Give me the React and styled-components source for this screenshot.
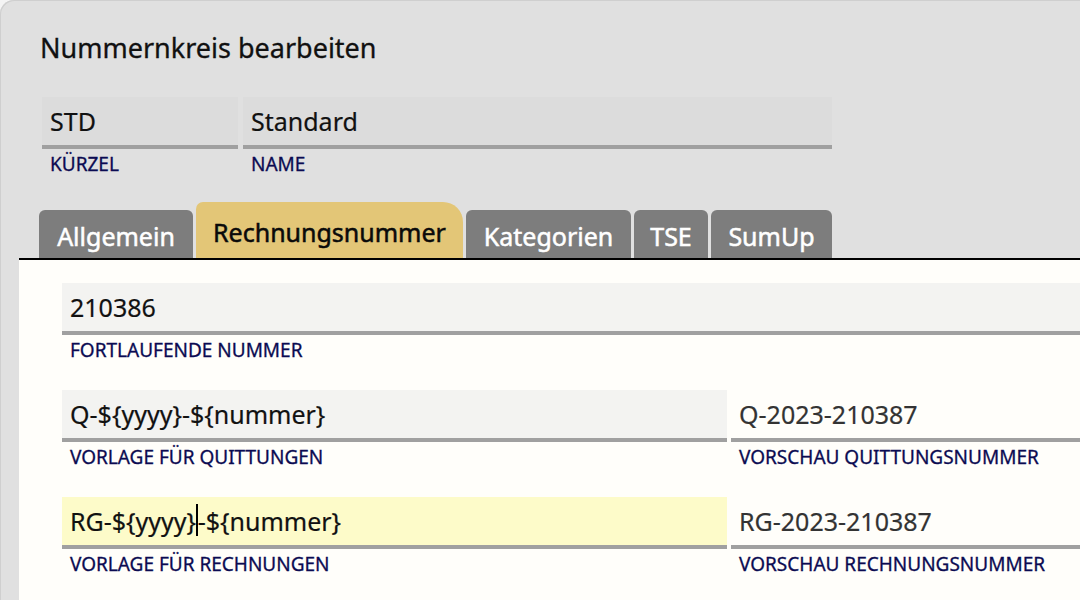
import React from 'react'
import styled, { createGlobalStyle } from 'styled-components'

const GlobalStyle = createGlobalStyle`
    html, body {
        margin: 0;
        padding: 0;
        background: #f4f4f4;
        overflow: hidden;
    }
    body {
        font-family: "Noto Sans", "Open Sans", sans-serif;
    }
`

const tabs = [
    { label: 'Allgemein', width: 154 },
    { label: 'Rechnungsnummer', width: 267, active: true },
    { label: 'Kategorien', width: 165 },
    { label: 'TSE', width: 74 },
    { label: 'SumUp', width: 121 },
]

const App = () => {

    return (
        <Page>
            <GlobalStyle />
            <Header>
                <Title>Nummernkreis bearbeiten</Title>

                <FieldRow>
                    <Field width={196}>
                        <FieldBox tone={'header'}>STD</FieldBox>
                        <FieldLabel>Kürzel</FieldLabel>
                    </Field>
                    <Field width={589}>
                        <FieldBox tone={'header'}>Standard</FieldBox>
                        <FieldLabel>Name</FieldLabel>
                    </Field>
                </FieldRow>
            </Header>

            <TabBar>
                { tabs.map(t =>
                    <Tab key={t.label} active={t.active} width={t.width}>{t.label}</Tab>
                )}
            </TabBar>

            <Content>
                <ContentRow>
                    <Field width={1040}>
                        <FieldBox tone={'input'}>210386</FieldBox>
                        <FieldLabel>Fortlaufende Nummer</FieldLabel>
                    </Field>
                </ContentRow>

                <ContentRow>
                    <Field width={665}>
                        <FieldBox tone={'input'}>Q-${'{yyyy}'}-${'{nummer}'}</FieldBox>
                        <FieldLabel>Vorlage für Quittungen</FieldLabel>
                    </Field>
                    <Field width={370}>
                        <FieldBox tone={'preview'}>Q-2023-210387</FieldBox>
                        <FieldLabel>Vorschau Quittungsnummer</FieldLabel>
                    </Field>
                </ContentRow>

                <ContentRow>
                    <Field width={665}>
                        <FieldBox tone={'focus'}>
                            RG-${'{yyyy}'}<Caret />-${'{nummer}'}
                        </FieldBox>
                        <FieldLabel>Vorlage für Rechnungen</FieldLabel>
                    </Field>
                    <Field width={370}>
                        <FieldBox tone={'preview'}>RG-2023-210387</FieldBox>
                        <FieldLabel>Vorschau Rechnungsnummer</FieldLabel>
                    </Field>
                </ContentRow>
            </Content>
        </Page>
    )
}

const boxColors = {
    header: '#dcdcdc',
    input: '#f3f3f1',
    focus: '#fdfbc9',
    preview: 'transparent',
}

const Page = styled.div`
    width: 1080px;
    height: 600px;
    background-color: #e0e0e0;
    border-top-left-radius: 14px;
    box-shadow: inset 1px 1px 0 #cfcfcf;
    overflow: hidden;
    display: flex;
    flex-direction: column;
`

const Header = styled.div`
    padding: 28px 0 0 40px;
`

const Title = styled.h1`
    margin: 0;
    height: 40px;
    font-size: 27px;
    font-weight: 400;
    line-height: 40px;
    color: #111;
    -webkit-text-stroke: 0.3px #111;
`

const FieldRow = styled.div`
    display: flex;
    gap: 5px;
    margin-top: 29px;
    margin-left: 2px;
`

const Field = styled.div`
    width: ${props => props.width}px;
    flex-shrink: 0;
    display: flex;
    flex-direction: column;
`

const FieldBox = styled.div`
    height: 48px;
    box-sizing: content-box;
    background-color: ${props => boxColors[props.tone]};
    border-bottom: 4px solid #a0a0a0;
    padding: 0 8px;
    display: flex;
    align-items: center;
    font-size: 25px;
    color: ${props => props.tone === 'preview' ? '#333' : '#111'};
    -webkit-text-stroke: 0.2px currentColor;
    white-space: nowrap;
`

const FieldLabel = styled.div`
    padding: 4px 8px 0;
    height: 22px;
    font-size: 19px;
    line-height: 22px;
    text-transform: uppercase;
    color: #0b0b52;
    -webkit-text-stroke: 0.3px #0b0b52;
`

const Caret = styled.span`
    display: inline-block;
    width: 1.5px;
    height: 32px;
    background-color: #000;
    margin-bottom: 2px;
`

const TabBar = styled.div`
    display: flex;
    align-items: flex-end;
    gap: 3px;
    margin-top: 27px;
    padding-left: 39px;
    height: 56px;
`

const Tab = styled.div`
    width: ${props => props.width}px;
    height: ${props => props.active ? '56px' : '48px'};
    box-sizing: border-box;
    padding-top: 4px;
    background-color: ${props => props.active ? '#e3c677' : '#7d7d7d'};
    color: ${props => props.active ? '#0a0a0a' : '#ffffff'};
    border-radius: ${props => props.active ? '7px 20px 0 0' : '6px 6px 0 0'};
    display: flex;
    align-items: center;
    justify-content: center;
    font-size: 25px;
    font-weight: 400;
    -webkit-text-stroke: 0.5px currentColor;
`

const Content = styled.div`
    flex: 1;
    margin-left: 19px;
    background-color: #fffefa;
    border-top: 2px solid #000;
    padding: 23px 0 0 43px;
    display: flex;
    flex-direction: column;
    gap: 29px;
`

const ContentRow = styled.div`
    display: flex;
    gap: 4px;
`

export default App
